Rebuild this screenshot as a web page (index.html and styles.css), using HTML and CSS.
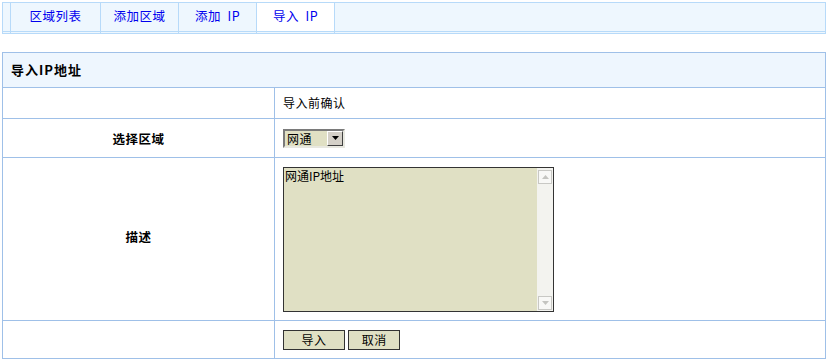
FILE: index.html
```html
<!DOCTYPE html>
<html lang="zh-CN">
<head>
  <meta charset="UTF-8" />
  <title>导入IP地址</title>
  <link rel="stylesheet" href="styles.css">
</head>
<body>

  <div class="tab-bar">
    <span class="tab-spacer"></span>
    <a class="tab" href="#">区域列表</a>
    <a class="tab" href="#">添加区域</a>
    <a class="tab" href="#">添加&nbsp; IP</a>
    <a class="tab active" href="#">导入&nbsp; IP</a>
  </div>

  <form class="form-box">
    <table class="form-table">
      <tr class="head-row">
        <th colspan="2">导入IP地址</th>
      </tr>
      <tr class="row-confirm">
        <td class="label"></td>
        <td class="value">导入前确认</td>
      </tr>
      <tr class="row-zone">
        <td class="label">选择区域</td>
        <td class="value">
          <div class="select-box">
            <span class="select-text">网通</span>
            <span class="select-arrow">
              <svg width="7" height="4" viewBox="0 0 7 4"><path d="M0 0h7L3.5 4z" fill="#000"/></svg>
            </span>
          </div>
        </td>
      </tr>
      <tr class="row-desc">
        <td class="label">描述</td>
        <td class="value">
          <div class="text-box">
            <textarea class="ip-text">网通IP地址</textarea>
            <div class="scrollbar">
              <span class="scroll-btn">
                <svg width="7" height="4" viewBox="0 0 7 4"><path d="M0 4h7L3.5 0z" fill="#c4c4c0"/></svg>
              </span>
              <span class="scroll-btn">
                <svg width="7" height="4" viewBox="0 0 7 4"><path d="M0 0h7L3.5 4z" fill="#c4c4c0"/></svg>
              </span>
            </div>
          </div>
        </td>
      </tr>
      <tr class="row-actions">
        <td class="label"></td>
        <td class="value">
          <button type="button" class="btn btn-import">导入</button>
          <button type="button" class="btn btn-cancel">取消</button>
        </td>
      </tr>
    </table>
  </form>

</body>
</html>
```

FILE: styles.css
```css
* {
  box-sizing: border-box;
  margin: 0;
  padding: 0;
}

body {
  font-family: "Noto Sans CJK SC", "DejaVu Sans", sans-serif;
  font-size: 12px;
  letter-spacing: 0.5px;
  color: #000;
  background-color: #fff;
  padding: 2px;
  width: 828px;
}

/* TABS */
.tab-bar {
  display: flex;
  width: 824px;
  height: 32px;
  border: 1px solid #b7daf9;
  background-color: #eef7fe;
  background-image: linear-gradient(to bottom, transparent 28px, #b7daf9 28px, #b7daf9 29px, transparent 29px);
}

.tab-spacer {
  width: 7px;
}

.tab {
  display: flex;
  align-items: flex-start;
  justify-content: center;
  padding-top: 5px;
  width: 78px;
  height: 30px;
  border-left: 1px solid #b7daf9;
  color: #0000ee;
  text-decoration: none;
  font-size: 12.5px;
  line-height: 16px;
}

.tab:first-of-type {
  width: 90px;
}

.tab.active {
  background-image: linear-gradient(to bottom, #fff 28px, transparent 28px);
  border-right: 1px solid #b7daf9;
  width: 79px;
}

/* FORM TABLE */
.form-box {
  margin-top: 18px;
}

.form-table {
  width: 824px;
  border-collapse: collapse;
  border: 1px solid #9fc0e8;
}

.form-table th,
.form-table td {
  border: 1px solid #9fc0e8;
}

.head-row th {
  height: 35px;
  background-color: #eef6fe;
  text-align: left;
  padding-left: 8px;
  padding-bottom: 1px;
  font-size: 13px;
  font-weight: bold;
  letter-spacing: 1px;
}

.label {
  width: 272px;
  text-align: center;
  font-weight: bold;
  font-size: 12.5px;
}

.value {
  padding-left: 8px;
  text-align: left;
}

.row-confirm td {
  height: 31px;
  padding-bottom: 2px;
}

.row-zone td {
  height: 39px;
}

.row-desc td {
  height: 163px;
}

.row-desc .label {
  padding-bottom: 5px;
}

.row-actions td {
  height: 38px;
}

/* SELECT */
.select-box {
  display: flex;
  width: 62px;
  height: 19px;
  border: 2px solid;
  border-color: #7a7a7a #e8e8e0 #e8e8e0 #7a7a7a;
  background-color: #e0e0c4;
}

.select-text {
  flex: 1;
  padding-left: 2px;
  line-height: 15px;
}

.select-arrow {
  display: flex;
  align-items: center;
  justify-content: center;
  width: 16px;
  background-color: #d4d0c8;
  border: 1px solid;
  border-color: #fff #404040 #404040 #fff;
}

/* TEXTAREA */
.text-box {
  display: flex;
  width: 271px;
  height: 145px;
  border: 1px solid #333;
  background-color: #e0e0c4;
}

.ip-text {
  flex: 1;
  border: none;
  background: transparent;
  resize: none;
  overflow: hidden;
  font-family: inherit;
  font-size: 12px;
  letter-spacing: 0;
  line-height: 16px;
  padding: 0 1px;
  color: #000;
  outline: none;
}

.scrollbar {
  display: flex;
  flex-direction: column;
  justify-content: space-between;
  width: 16px;
  padding: 2px 1px 1px 1px;
  background-color: #f3f3ef;
}

.scroll-btn {
  display: flex;
  align-items: center;
  justify-content: center;
  height: 14px;
  border: 1px solid #c8c8c4;
  background-color: #f8f8f6;
}

/* BUTTONS */
.btn {
  height: 20px;
  border: 1px solid #333;
  background-color: #e0e0c4;
  font-family: inherit;
  font-size: 12px;
  letter-spacing: 0.5px;
  line-height: 16px;
  color: #000;
  vertical-align: middle;
}

.btn-import {
  width: 62px;
}

.btn-cancel {
  width: 52px;
}
```
